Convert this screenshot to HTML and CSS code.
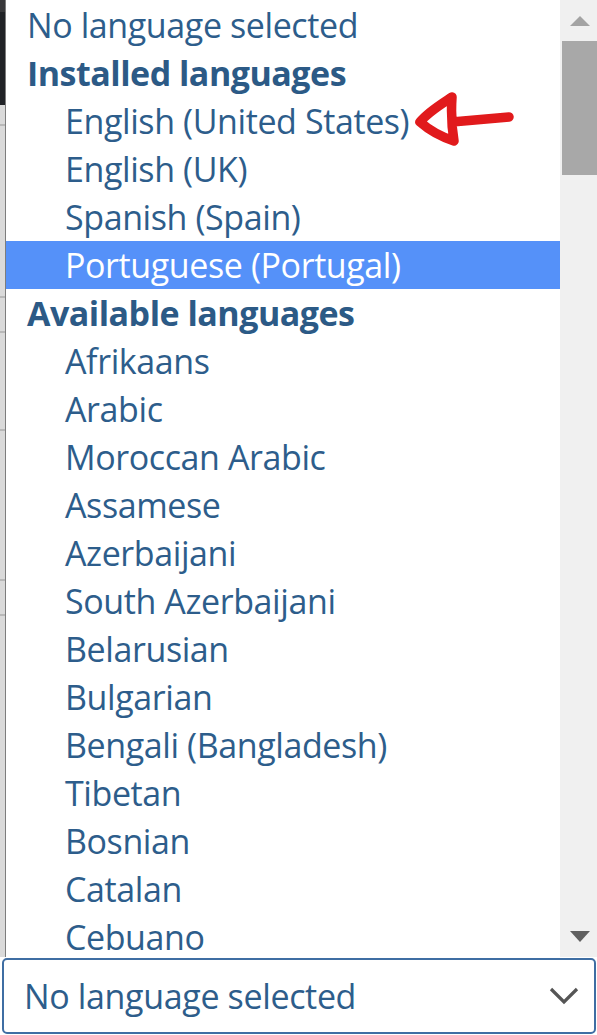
FILE: index.html
```html
<!DOCTYPE html>
<html lang="en">
<head>
<meta charset="utf-8">
<title>Language select</title>
<link rel="stylesheet" href="styles.css">
</head>
<body>
<div class="screen">
  <div class="top">
    <div class="backdrop"></div>
    <div class="listbox">
      <div class="options">
        <div class="opt">No language selected</div>
        <div class="group">Installed languages</div>
        <div class="opt sub">English (United States)</div>
        <div class="opt sub">English (UK)</div>
        <div class="opt sub">Spanish (Spain)</div>
        <div class="opt sub selected">Portuguese (Portugal)</div>
        <div class="group">Available languages</div>
        <div class="opt sub">Afrikaans</div>
        <div class="opt sub">Arabic</div>
        <div class="opt sub">Moroccan Arabic</div>
        <div class="opt sub">Assamese</div>
        <div class="opt sub">Azerbaijani</div>
        <div class="opt sub">South Azerbaijani</div>
        <div class="opt sub">Belarusian</div>
        <div class="opt sub">Bulgarian</div>
        <div class="opt sub">Bengali (Bangladesh)</div>
        <div class="opt sub">Tibetan</div>
        <div class="opt sub">Bosnian</div>
        <div class="opt sub">Catalan</div>
        <div class="opt sub">Cebuano</div>
      </div>
      <div class="scrollbar">
        <div class="sb-btn">
          <svg width="20" height="10" viewBox="0 0 20 10"><polygon points="10,0 20,10 0,10" fill="#a3a3a3"/></svg>
        </div>
        <div class="thumb"></div>
        <div class="track"></div>
        <div class="sb-btn">
          <svg width="20" height="11" viewBox="0 0 20 11"><polygon points="0,0 20,0 10,11" fill="#606060"/></svg>
        </div>
      </div>
    </div>
  </div>
  <div class="select">
    <span class="select-text">No language selected</span>
    <svg class="chevron" width="30" height="18" viewBox="0 0 30 18"><polyline points="2,2 15,15 28,2" fill="none" stroke="#555" stroke-width="3.2"/></svg>
  </div>
</div>
<svg class="annotation" width="110" height="60" viewBox="0 0 110 60">
  <path d="M101,25 L44,30 M44,5 C35,11 20,20 12,30 C21,38 34,45 46,49 C44,37 43,20 44,5 Z" fill="none" stroke="#e11a1c" stroke-width="9.5" stroke-linecap="round" stroke-linejoin="round"/>
</svg>
</body>
</html>
```

FILE: styles.css
```css
* { box-sizing: border-box; }
html, body { margin: 0; padding: 0; background: #fff; }
body {
  width: 597px;
  height: 1035px;
  overflow: hidden;
  position: relative;
  font-family: "Open Sans", "Noto Sans", sans-serif;
}
.screen {
  display: flex;
  flex-direction: column;
  height: 1035px;
}
.top {
  display: flex;
  height: 957px;
}
.backdrop {
  width: 5px;
  flex: none;
  background: linear-gradient(to bottom,
    #38383a 0 12px, #202226 12px 105px,
    #dadada 105px 124px, #b8b8b8 124px 126px,
    #dadada 126px 296px, #b8b8b8 296px 298px,
    #dadada 298px 331px, #b8b8b8 331px 333px,
    #dadada 333px 429px, #b8b8b8 429px 431px,
    #dadada 431px 579px, #b8b8b8 579px 581px,
    #dadada 581px 614px, #b8b8b8 614px 616px,
    #dadada 616px);
}
.listbox {
  flex: 1;
  display: flex;
  border-left: 1px solid #7d7d7d;
  background: #fff;
  overflow: hidden;
}
.options {
  flex: 1;
  padding-top: 1px;
  overflow: hidden;
}
.opt, .group {
  height: 48px;
  line-height: 48px;
  font-size: 34px;
  letter-spacing: -0.4px;
  color: #2d5d8b;
  white-space: nowrap;
  padding-left: 21px;
}
.group {
  font-weight: 700;
  color: #2c5a86;
  padding-left: 21px;
  letter-spacing: -0.5px;
}
.opt.sub { padding-left: 59px; }
.opt.selected {
  background: #5591f9;
  color: #fff;
}
.scrollbar {
  width: 37px;
  flex: none;
  background: #f0f0f0;
  display: flex;
  flex-direction: column;
}
.sb-btn {
  height: 41px;
  display: flex;
  align-items: center;
  justify-content: center;
  padding-left: 2px;
}
.thumb {
  height: 134px;
  margin-left: 2px;
  background: #a8a8a8;
}
.track { flex: 1; }
.select {
  margin: 1px 1px 1px 2px;
  height: 76px;
  border: 2px solid #3f6ea3;
  border-radius: 5px;
  display: flex;
  align-items: center;
  justify-content: space-between;
  padding: 0 15px 0 20px;
}
.select-text {
  font-size: 34px;
  letter-spacing: -0.35px;
  color: #2d5d8b;
  white-space: nowrap;
}
.chevron { display: block; }
.annotation {
  position: absolute;
  left: 408px;
  top: 92px;
}
```
